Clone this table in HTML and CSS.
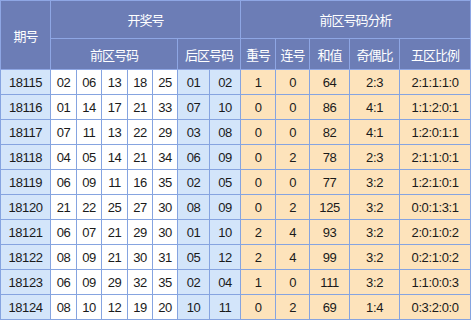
FILE: index.html
```html
<!DOCTYPE html>
<html lang="zh">
<head>
<meta charset="utf-8">
<link rel="stylesheet" href="styles.css">
</head>
<body>
<table class="tbl">
  <colgroup>
    <col class="c-qh">
    <col class="c-f1"><col class="c-f2"><col class="c-f3"><col class="c-f4"><col class="c-f5">
    <col class="c-b1"><col class="c-b2">
    <col class="c-a1"><col class="c-a2"><col class="c-a3"><col class="c-a4"><col class="c-a5">
  </colgroup>
  <thead>
    <tr class="h1">
      <th rowspan="2">期号</th>
      <th colspan="7">开奖号</th>
      <th colspan="5">前区号码分析</th>
    </tr>
    <tr class="h2">
      <th colspan="5">前区号码</th>
      <th colspan="2">后区号码</th>
      <th>重号</th><th>连号</th><th>和值</th><th>奇偶比</th><th>五区比例</th>
    </tr>
  </thead>
  <tbody>
    <tr><td class="qh">18115</td><td>02</td><td>06</td><td>13</td><td>18</td><td>25</td><td class="bk">01</td><td class="bk">02</td><td class="an">1</td><td class="an">0</td><td class="an">64</td><td class="an">2:3</td><td class="an">2:1:1:1:0</td></tr>
    <tr><td class="qh">18116</td><td>01</td><td>14</td><td>17</td><td>21</td><td>33</td><td class="bk">07</td><td class="bk">10</td><td class="an">0</td><td class="an">0</td><td class="an">86</td><td class="an">4:1</td><td class="an">1:1:2:0:1</td></tr>
    <tr><td class="qh">18117</td><td>07</td><td>11</td><td>13</td><td>22</td><td>29</td><td class="bk">03</td><td class="bk">08</td><td class="an">0</td><td class="an">0</td><td class="an">82</td><td class="an">4:1</td><td class="an">1:2:0:1:1</td></tr>
    <tr><td class="qh">18118</td><td>04</td><td>05</td><td>14</td><td>21</td><td>34</td><td class="bk">06</td><td class="bk">09</td><td class="an">0</td><td class="an">2</td><td class="an">78</td><td class="an">2:3</td><td class="an">2:1:1:0:1</td></tr>
    <tr><td class="qh">18119</td><td>06</td><td>09</td><td>11</td><td>16</td><td>35</td><td class="bk">02</td><td class="bk">05</td><td class="an">0</td><td class="an">0</td><td class="an">77</td><td class="an">3:2</td><td class="an">1:2:1:0:1</td></tr>
    <tr><td class="qh">18120</td><td>21</td><td>22</td><td>25</td><td>27</td><td>30</td><td class="bk">08</td><td class="bk">09</td><td class="an">0</td><td class="an">2</td><td class="an">125</td><td class="an">3:2</td><td class="an">0:0:1:3:1</td></tr>
    <tr><td class="qh">18121</td><td>06</td><td>07</td><td>21</td><td>29</td><td>30</td><td class="bk">01</td><td class="bk">10</td><td class="an">2</td><td class="an">4</td><td class="an">93</td><td class="an">3:2</td><td class="an">2:0:1:0:2</td></tr>
    <tr><td class="qh">18122</td><td>08</td><td>09</td><td>21</td><td>30</td><td>31</td><td class="bk">05</td><td class="bk">12</td><td class="an">2</td><td class="an">4</td><td class="an">99</td><td class="an">3:2</td><td class="an">0:2:1:0:2</td></tr>
    <tr><td class="qh">18123</td><td>06</td><td>09</td><td>29</td><td>32</td><td>35</td><td class="bk">02</td><td class="bk">04</td><td class="an">1</td><td class="an">0</td><td class="an">111</td><td class="an">3:2</td><td class="an">1:1:0:0:3</td></tr>
    <tr><td class="qh">18124</td><td>08</td><td>10</td><td>12</td><td>19</td><td>20</td><td class="bk">10</td><td class="bk">11</td><td class="an">0</td><td class="an">2</td><td class="an">69</td><td class="an">1:4</td><td class="an">0:3:2:0:0</td></tr>
  </tbody>
</table>
</body>
</html>
```

FILE: styles.css
```css
html, body {
  margin: 0;
  padding: 0;
  background: #ffffff;
}

.tbl {
  border-collapse: collapse;
  table-layout: fixed;
  width: 471px;
  font-family: "Liberation Sans", "Noto Sans CJK SC", sans-serif;
  color: #1a1a1a;
}

.c-qh { width: 50px; }
.c-f1 { width: 26px; }
.c-f2 { width: 25px; }
.c-f3 { width: 26px; }
.c-f4 { width: 25px; }
.c-f5 { width: 25px; }
.c-b1 { width: 32px; }
.c-b2 { width: 31px; }
.c-a1 { width: 35px; }
.c-a2 { width: 34px; }
.c-a3 { width: 40px; }
.c-a4 { width: 50px; }
.c-a5 { width: 71px; }

.tbl th,
.tbl td {
  border: 1px solid #86a4e0;
  padding: 0;
  text-align: center;
  vertical-align: middle;
  white-space: nowrap;
  overflow: hidden;
}

.tbl th {
  background: #6c7db6;
  color: #ffffff;
  font-weight: normal;
  font-size: 13px;
  letter-spacing: -1px;
  border-color: #8ea6e4;
}

.h1 th { height: 37px; }
.h2 th { height: 30px; }

.tbl td {
  height: 24px;
  font-size: 13px;
  letter-spacing: -0.4px;
  background: #ffffff;
}

.tbl td.qh,
.tbl td.bk {
  background: #d3e5fa;
}

.tbl td.an {
  background: #fde3bb;
}
```
